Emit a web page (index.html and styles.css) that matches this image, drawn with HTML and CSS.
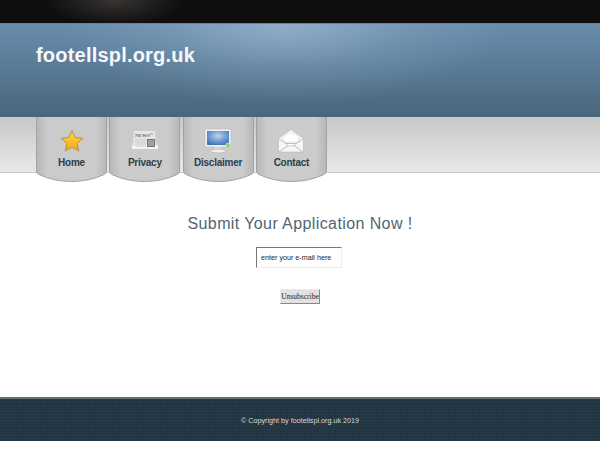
FILE: index.html

```html
<!DOCTYPE html>
<html lang="en">
<head>
  <meta charset="UTF-8">
  <title>footellspl.org.uk</title>
  <link rel="stylesheet" href="styles.css">
</head>
<body>
  <div class="topbar"></div>
  <header class="banner">
    <h1 class="site-name">footellspl.org.uk</h1>
  </header>

  <nav class="menu">
    <a class="tab" href="#">
      <svg class="icon" width="26" height="26" viewBox="0 0 26 26">
        <defs>
          <linearGradient id="star" x1="0" y1="0" x2="0" y2="1">
            <stop offset="0" stop-color="#fdd94f"/>
            <stop offset="1" stop-color="#f6a80c"/>
          </linearGradient>
        </defs>
        <path d="M13 2.500l3.200 7 7.600.8-5.700 5.100 1.600 7.600-6.700-3.900-6.700 3.900 1.600-7.600-5.700-5.100 7.600-.8z" fill="url(#star)" stroke="#b08a2a" stroke-width=".8" stroke-linejoin="round"/>
      </svg>
      <span>Home</span>
    </a>
    <a class="tab" href="#">
      <svg class="icon" width="28" height="26" viewBox="0 0 28 26">
        <path d="M3 3h21l1 17H2z" fill="#e6e6e6"/>
        <rect x="1" y="17" width="26" height="4" rx="1" fill="#f4f4f4"/>
        <text class="news" x="4" y="9">NEWS</text>
        <rect x="19" y="5" width="3" height="2" fill="#bbb"/>
        <path d="M4 12h11M4 14h11M4 16h11M4 18h11" stroke="#cdcdcd"/>
        <rect x="16" y="11" width="8" height="8" fill="#777"/>
        <path d="M17 13h6M17 15h6M17 17h6" stroke="#ddd" stroke-width=".8"/>
      </svg>
      <span>Privacy</span>
    </a>
    <a class="tab" href="#">
      <svg class="icon" width="28" height="26" viewBox="0 0 28 26">
        <defs>
          <radialGradient id="screen" cx=".5" cy=".35" r=".7">
            <stop offset="0" stop-color="#c4d4e8"/>
            <stop offset=".55" stop-color="#6f9dd2"/>
            <stop offset="1" stop-color="#3c72b3"/>
          </radialGradient>
        </defs>
        <rect x="1" y="1" width="26" height="18" rx="1.500" fill="#eef0f1" stroke="#b5b5b5" stroke-width=".5"/>
        <rect x="3" y="3" width="22" height="14" fill="url(#screen)"/>
        <path d="M11 19h6l1 3h-8z" fill="#d8d8d8"/>
        <ellipse cx="14" cy="23" rx="8" ry="1.800" fill="#efefef" stroke="#a9a9a9" stroke-width=".5"/>
        <circle cx="24" cy="17.500" r="2.500" fill="#8fd06a" stroke="#e8f5df" stroke-width=".6"/>
      </svg>
      <span>Disclaimer</span>
    </a>
    <a class="tab" href="#">
      <svg class="icon" width="28" height="26" viewBox="0 0 28 26">
        <path d="M1.500 10.500L14 1.500l12.500 9V24h-25z" fill="#f6f6f6" stroke="#b8b8b8" stroke-width=".6"/>
        <path d="M6 9L14 4.500 22 9l-1 5H7z" fill="#fff" stroke="#d5d5d5" stroke-width=".5"/>
        <path d="M2 11l7 4.500h10l7-4.500" fill="none" stroke="#a3a3a3" stroke-width=".7"/>
        <path d="M2 24l9-6.500M26 24l-9-6.500" stroke="#a9a9a9" stroke-width=".8"/>
        <path d="M9 15.500h10l-3 2.500h-4z" fill="#fff" stroke="#a9a9a9" stroke-width=".6"/>
      </svg>
      <span>Contact</span>
    </a>
  </nav>

  <main class="content">
    <h2 class="headline">Submit Your Application Now !</h2>
    <form class="signup">
      <input class="email" type="text" value="enter your e-mail here">
      <button class="submit" type="button">Unsubscribe</button>
    </form>
  </main>

  <footer class="footer">
    <p>© Copyright by footellspl.org.uk 2019</p>
  </footer>
</body>
</html>
```

FILE: styles.css

```css
* { margin: 0; padding: 0; box-sizing: border-box; }
body { background: #fff; font-family: "Liberation Sans", Arial, sans-serif; color: #333; }

.topbar {
  height: 23px;
  background: radial-gradient(ellipse 70px 26px at 115px 0, #383533 0%, #201f1e 55%, transparent 100%), #0e0e0e;
}

.banner {
  height: 94px;
  padding: 20px 36px 0;
  border-top: 1px solid #6f7f8c;
  background:
    radial-gradient(ellipse 220px 80px at 285px 0, rgba(165, 192, 218, .65), rgba(165, 192, 218, .2) 55%, rgba(165, 192, 218, 0) 100%),
    linear-gradient(#6a8dac, #48667c);
}
.site-name { font-size: 20px; line-height: 23px; font-weight: bold; color: #f6f8fa; letter-spacing: .2px; }

.menu {
  height: 56px;
  padding-left: 36px;
  display: flex;
  gap: 2.300px;
  align-items: flex-start;
  background: linear-gradient(#c8c8c8, #e8e8e8);
  border-bottom: 1px solid #c9c9c9;
}
/* tab outline is a shallow arc, border-radius gives too round a corner */
.tab {
  width: 71px;
  height: 66px;
  flex: none;
  padding-top: 11px;
  display: flex;
  flex-direction: column;
  align-items: center;
  text-decoration: none;
  background: url("data:image/svg+xml,%3Csvg xmlns='http://www.w3.org/2000/svg' width='71' height='66'%3E%3ClinearGradient id='g'%3E%3Cstop offset='0' stop-color='%23b6b6b6'/%3E%3Cstop offset='.15' stop-color='%23cbcbcb'/%3E%3Cstop offset='.85' stop-color='%23cbcbcb'/%3E%3Cstop offset='1' stop-color='%23b6b6b6'/%3E%3C/linearGradient%3E%3Cpath d='M.5 0V54.500Q.5 56 3 57.500Q18 64.500 35.500 64.500Q53 64.500 68 57.500Q70.500 56 70.500 54.500V0' fill='url(%23g)' stroke='%23a2a2a2'/%3E%3C/svg%3E") no-repeat;
}
.tab span { margin-top: 3px; font-size: 10px; line-height: 12px; font-weight: bold; color: #2c3d4c; letter-spacing: -.25px; }
.icon { height: 26px; display: block; }
.news { font: bold 5px "Liberation Serif", serif; fill: #666; }

.content { height: 224px; padding-top: 41px; text-align: center; }
.headline { font-size: 16px; line-height: 20px; font-weight: normal; color: #4f6677; letter-spacing: .4px; }
.signup { display: flex; flex-direction: column; align-items: center; }
.email {
  width: 86px;
  height: 21px;
  margin: 13px 2px 0 0;
  padding: 0 4px;
  font: 7.200px "Liberation Sans", sans-serif;
  color: #222;
  background: #fff;
  border: 1px solid #eee;
  border-top-color: #777;
  border-left-color: #777;
  outline: none;
}
.submit {
  width: 40px;
  height: 15px;
  margin-top: 21px;
  font: 7.500px "Liberation Serif", serif;
  color: #222;
  background: #e4e2df;
  border: 1px solid #e9e9e9;
  border-right-color: #888;
  border-bottom-color: #888;
}

.footer {
  height: 44px;
  padding-top: 17px;
  text-align: center;
  border-top: 2px solid #5f6f74;
  background:
    repeating-linear-gradient(90deg, rgba(255, 255, 255, .025) 0 1px, transparent 1px 3px),
    repeating-linear-gradient(rgba(255, 255, 255, .025) 0 1px, transparent 1px 3px),
    #203442;
}
.footer p { font-size: 7.200px; line-height: 10px; color: #d5dade; }
```
